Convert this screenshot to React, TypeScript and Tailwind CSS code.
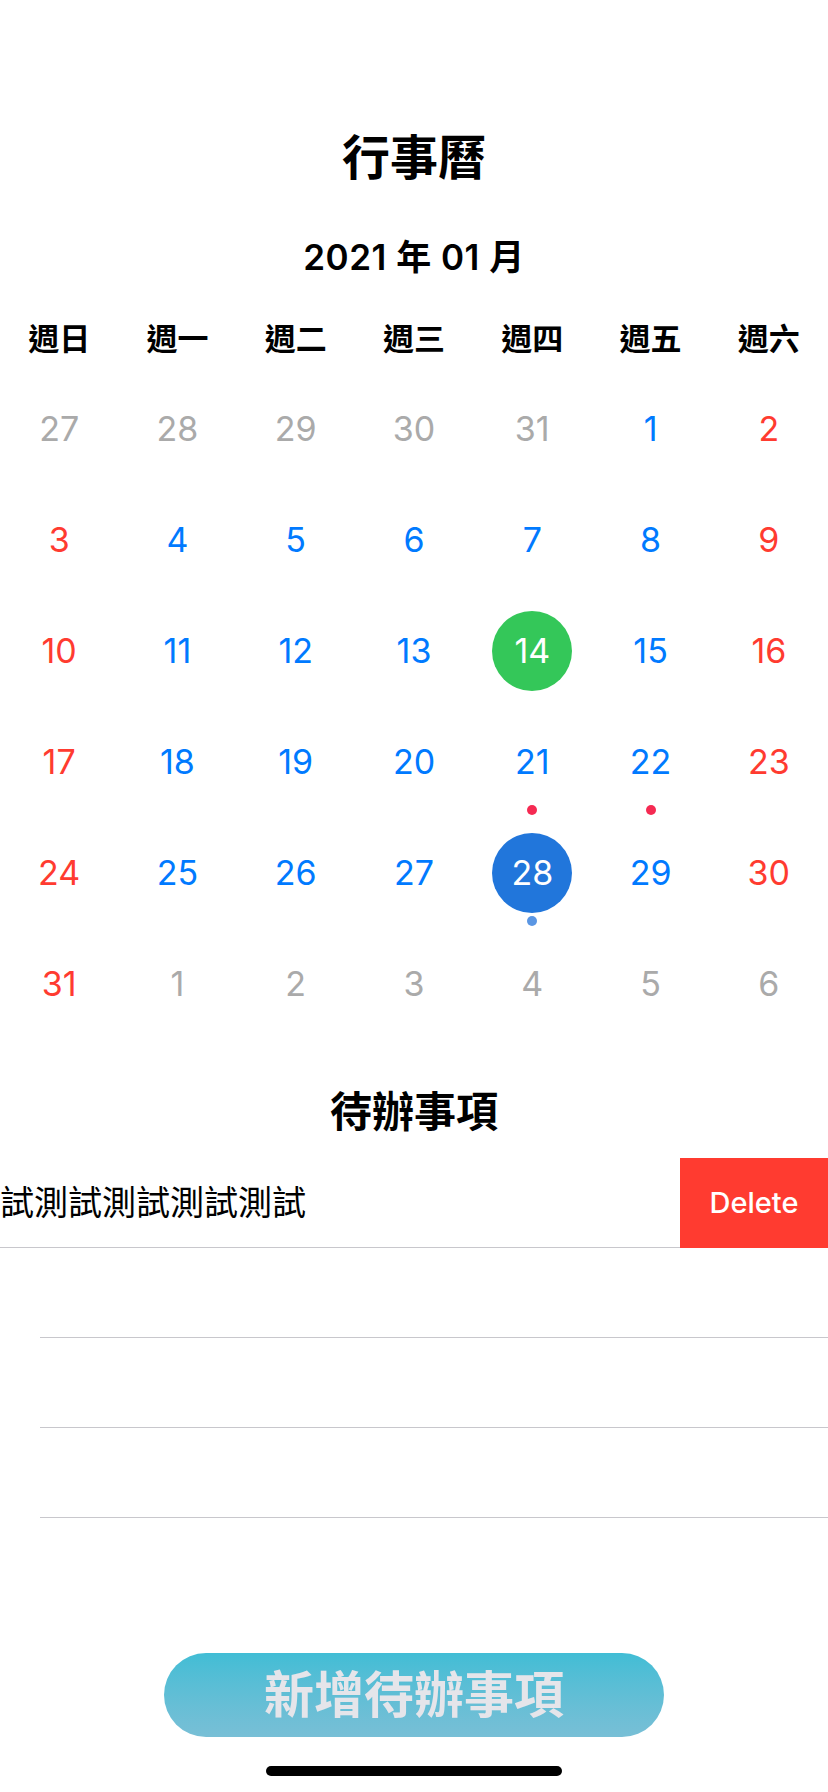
import React from "react";

type Day = {
  n: number;
  tone: "gray" | "blue" | "red";
  mark?: "today" | "selected";
  dot?: "red" | "blue";
};

const weekdays = ["週日", "週一", "週二", "週三", "週四", "週五", "週六"];

const g = (n: number): Day => ({ n, tone: "gray" });
const b = (n: number, extra: Partial<Day> = {}): Day => ({ n, tone: "blue", ...extra });
const r = (n: number): Day => ({ n, tone: "red" });

const weeks: Day[][] = [
  [g(27), g(28), g(29), g(30), g(31), b(1), r(2)],
  [r(3), b(4), b(5), b(6), b(7), b(8), r(9)],
  [r(10), b(11), b(12), b(13), b(14, { mark: "today" }), b(15), r(16)],
  [r(17), b(18), b(19), b(20), b(21, { dot: "red" }), b(22, { dot: "red" }), r(23)],
  [r(24), b(25), b(26), b(27), b(28, { mark: "selected", dot: "blue" }), b(29), r(30)],
  [r(31), g(1), g(2), g(3), g(4), g(5), g(6)],
];

const toneClass = {
  gray: "text-[#aaaaaa]",
  blue: "text-[#007aff]",
  red: "text-[#ff3b30]",
};

const DayCell = ({ day }: { day: Day }) => {
  let circle = toneClass[day.tone];
  if (day.mark === "today") circle = "bg-[#34c759] text-white";
  if (day.mark === "selected") circle = "bg-[#2176db] text-white";
  return (
    <div className="relative flex items-center justify-center">
      <div className={`flex h-[80px] w-[80px] items-center justify-center rounded-full ${circle}`}>
        {day.n}
      </div>
      {day.dot && (
        <span
          className={`absolute left-1/2 top-[99px] h-[10px] w-[10px] -translate-x-1/2 rounded-full ${
            day.dot === "red" ? "bg-[#f52a52]" : "bg-[#5a96e3]"
          }`}
        />
      )}
    </div>
  );
};

export default function App() {
  return (
    <div
      className="flex h-[1792px] w-[828px] flex-col overflow-hidden bg-white text-black"
      style={{ fontFamily: "Inter, 'Noto Sans CJK TC', sans-serif" }}
    >
      <h1 className="mt-[134px] text-center text-[48px] font-bold leading-[48px]">行事曆</h1>
      <div className="mt-[58px] text-center text-[35px] font-semibold leading-[35px] tracking-[0.5px]">
        2021 年 01 月
      </div>

      <div className="mt-[48px] grid grid-cols-7 text-center text-[31px] font-semibold leading-[31px]">
        {weekdays.map((w) => (
          <div key={w}>{w}</div>
        ))}
      </div>

      <div className="mt-[19px] text-[34px] leading-none">
        {weeks.map((week, i) => (
          <div key={i} className="grid h-[111px] grid-cols-7">
            {week.map((d, j) => (
              <DayCell key={j} day={d} />
            ))}
          </div>
        ))}
      </div>

      <h2 className="mt-[52px] text-center text-[42px] font-bold leading-[42px]">待辦事項</h2>

      <div className="mt-[25px]">
        <div className="h-[90px] overflow-hidden">
          <div className="flex h-full w-[976px] -translate-x-[148px]">
            <div className="flex h-full w-[828px] items-center border-b border-[#c8c7cc] pl-[46px] text-[34px] whitespace-nowrap">
              測試測試測試測試測試測試
            </div>
            <div className="flex h-full w-[148px] items-center justify-center bg-[#ff3b30] text-[29px] font-medium text-white">
              Delete
            </div>
          </div>
        </div>
        {[0, 1, 2].map((i) => (
          <div key={i} className="ml-[40px] h-[90px] border-b border-[#c8c7cc]" />
        ))}
      </div>

      <button className="mx-auto mt-[135px] flex h-[84px] w-[500px] items-center justify-center rounded-full bg-linear-to-b from-[#41bdd5] to-[#78bfd6] text-[50px] font-bold text-[#e5e5ea]">
        新增待辦事項
      </button>

      <div className="mx-auto mt-[29px] h-[10px] w-[296px] rounded-full bg-black" />
    </div>
  );
}
